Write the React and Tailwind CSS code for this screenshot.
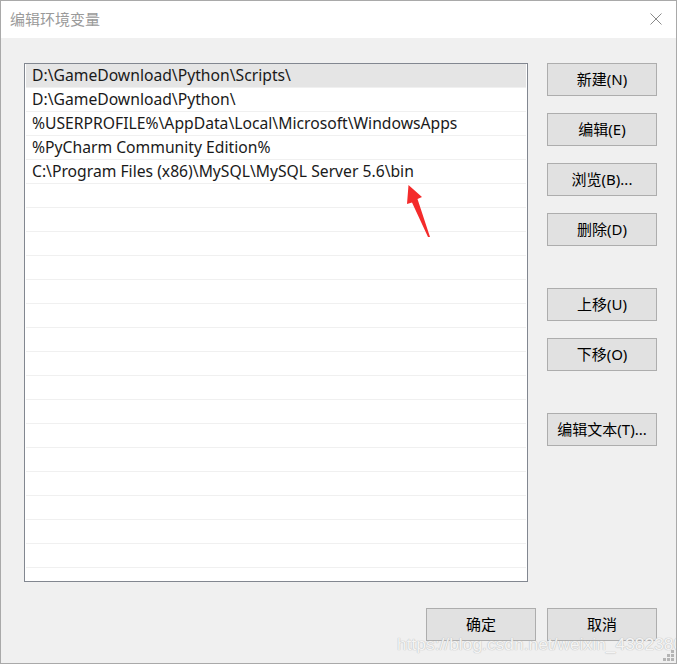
import React from "react";

const rows = [
  "D:\\GameDownload\\Python\\Scripts\\",
  "D:\\GameDownload\\Python\\",
  "%USERPROFILE%\\AppData\\Local\\Microsoft\\WindowsApps",
  "%PyCharm Community Edition%",
  "C:\\Program Files (x86)\\MySQL\\MySQL Server 5.6\\bin",
];

const font = { fontFamily: '"Noto Sans", "Noto Sans CJK SC", sans-serif' };

function Btn({ children, className = "" }) {
  return (
    <div
      className={
        "w-[110px] h-[33px] flex items-center justify-center bg-[#e1e1e1] border border-[#adadad] text-[15px] text-black " +
        className
      }
    >
      {children}
    </div>
  );
}

export default function App() {
  const all = [...rows];
  while (all.length < 22) all.push("");
  return (
    <div
      className="relative w-[677px] h-[664px] border border-[#a9a9a9] bg-[#f0f0f0] overflow-hidden flex flex-col"
      style={font}
    >
      <div className="h-[37px] bg-white flex items-center justify-between pl-[9px] pr-[14px] shrink-0">
        <span className="text-[15px] text-[#9a9a9a] font-['Noto_Sans_CJK_SC',sans-serif]">编辑环境变量</span>
        <svg width="12" height="12" viewBox="0 0 12 12" className="mb-[1px]">
          <path d="M0.5 0.5 L11.5 11.5 M11.5 0.5 L0.5 11.5" stroke="#8a8a8a" strokeWidth="1" />
        </svg>
      </div>
      <div className="flex pl-[23px] pt-[25px]">
        <div className="w-[504px] h-[519px] border border-[#828790] bg-white overflow-hidden">
          <div className="flex flex-col">
            {all.map((r, i) => (
              <div
                key={i}
                className={
                  "h-[24px] shrink-0 mx-[1px] border-b border-[#f0f0f0] flex items-center pl-[6px] pt-[1px] text-[15.7px] text-[#1a1a1a] whitespace-nowrap " +
                  (i === 0 ? "bg-[#e5e5e5]" : "")
                }
              >
                {r}
              </div>
            ))}
          </div>
        </div>
        <div className="ml-[19px] flex flex-col">
          <Btn>新建(N)</Btn>
          <Btn className="mt-[17px]">编辑(E)</Btn>
          <Btn className="mt-[17px]">浏览(B)...</Btn>
          <Btn className="mt-[17px]">删除(D)</Btn>
          <Btn className="mt-[42px]">上移(U)</Btn>
          <Btn className="mt-[17px]">下移(O)</Btn>
          <Btn className="mt-[42px]">编辑文本(T)...</Btn>
        </div>
      </div>
      <div className="flex justify-end gap-[11px] pr-[19px] mt-[26px]">
        <Btn>确定</Btn>
        <Btn>取消</Btn>
      </div>

      {/* red annotation arrow */}
      <svg
        className="absolute left-0 top-0 pointer-events-none"
        width="677"
        height="664"
        viewBox="0 0 677 664"
      >
        <polygon
          points="407.5,184 421,196 416.5,198 429,236 427,236 411,201.5 406,203"
          fill="#f42b2b"
        />
      </svg>

      {/* watermark */}
      <div
        className="absolute left-[396px] top-[633px] text-[17.4px] leading-[20px] text-[#f4f4f4] whitespace-nowrap pointer-events-none font-['Liberation_Sans',sans-serif]"
        style={{ textShadow: "0 0 1px #bdbdbd, 0 0 1px #bdbdbd" }}
      >
        https://blog.csdn.net/weixin_43823808
      </div>

      {/* resize grip */}
      <div className="absolute right-[2px] bottom-[2px] grid grid-cols-3 gap-[1px]">
        <span className="w-[3px] h-[3px]" />
        <span className="w-[3px] h-[3px]" />
        <span className="w-[3px] h-[3px] bg-[#b5b5b5]" />
        <span className="w-[3px] h-[3px]" />
        <span className="w-[3px] h-[3px] bg-[#b5b5b5]" />
        <span className="w-[3px] h-[3px] bg-[#b5b5b5]" />
        <span className="w-[3px] h-[3px] bg-[#b5b5b5]" />
        <span className="w-[3px] h-[3px] bg-[#b5b5b5]" />
        <span className="w-[3px] h-[3px] bg-[#b5b5b5]" />
      </div>
    </div>
  );
}
